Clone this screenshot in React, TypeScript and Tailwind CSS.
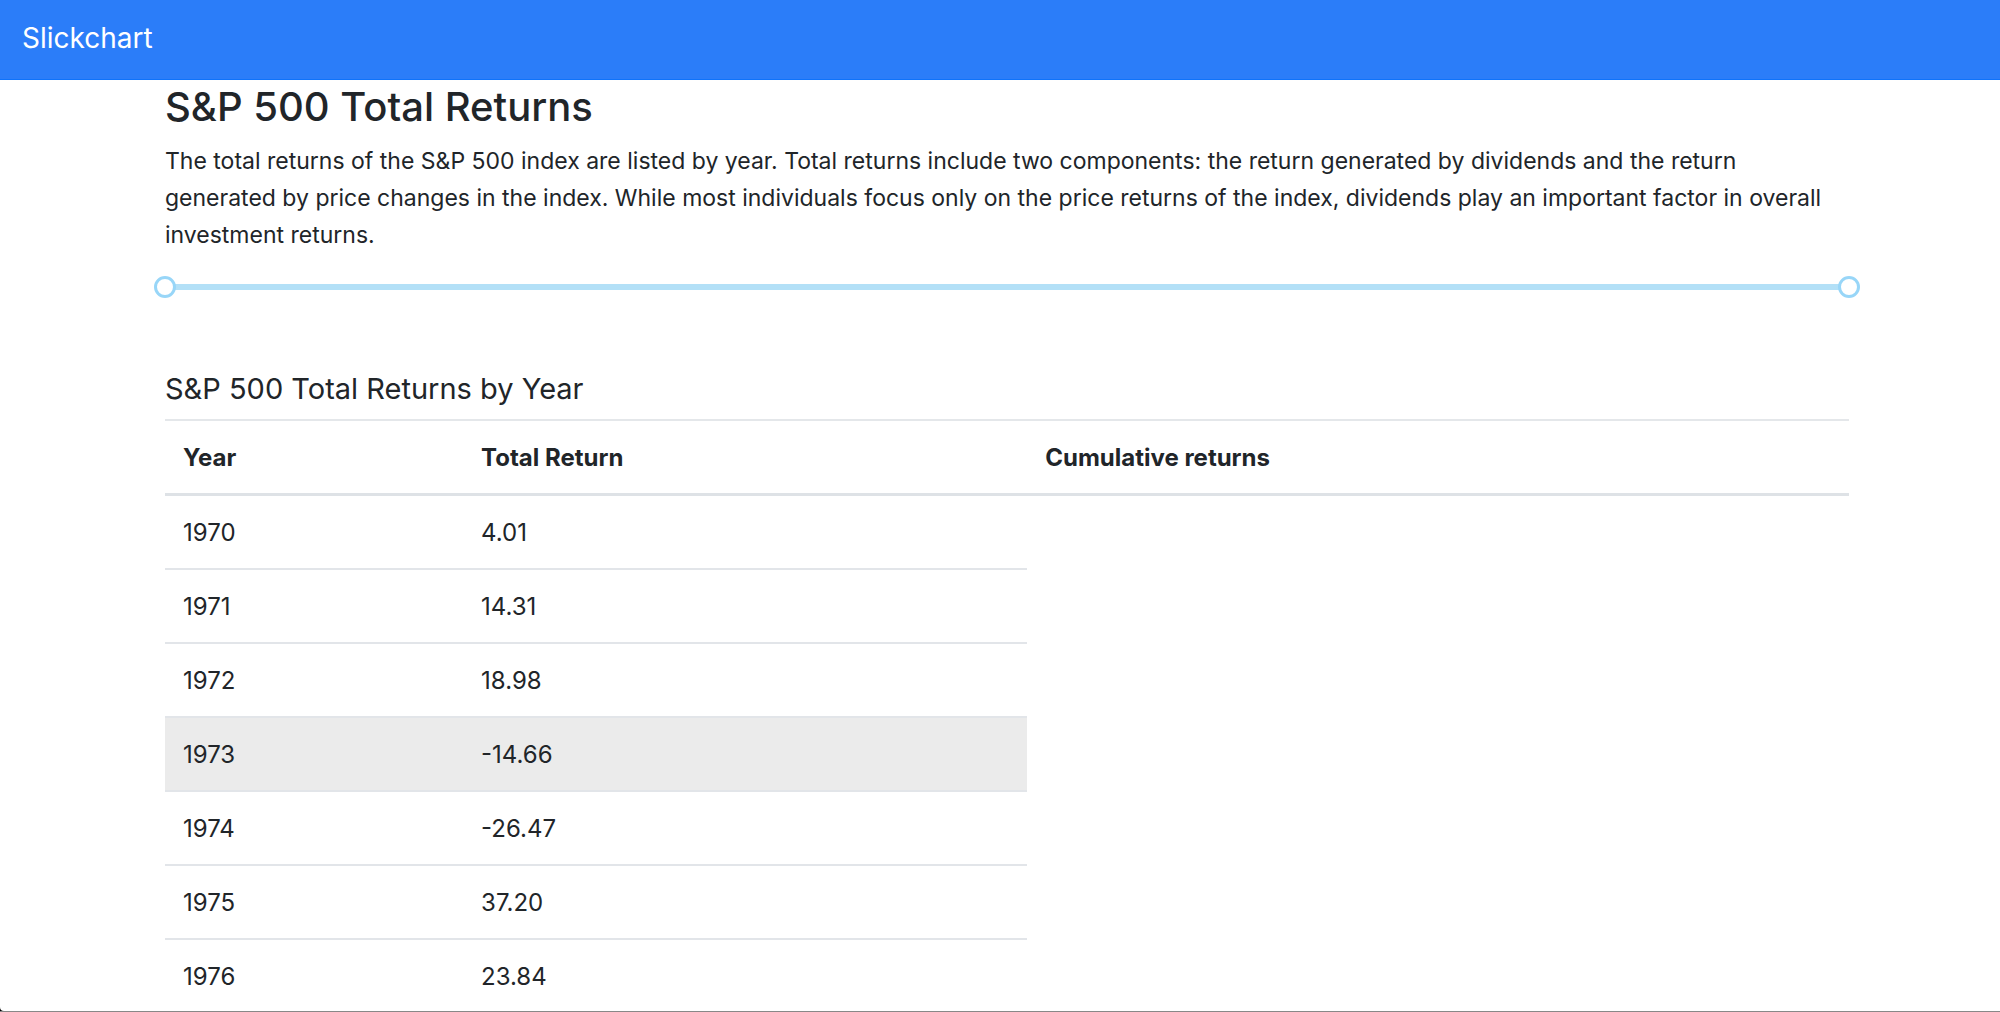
import { useState } from "react";

const returns = [
  { year: 1970, value: "4.01" },
  { year: 1971, value: "14.31" },
  { year: 1972, value: "18.98" },
  { year: 1973, value: "-14.66", active: true },
  { year: 1974, value: "-26.47" },
  { year: 1975, value: "37.20" },
  { year: 1976, value: "23.84" },
];

const MIN = 1970;
const MAX = 2019;

const thumb =
  "pointer-events-none absolute inset-0 h-full w-full appearance-none bg-transparent outline-none [&::-webkit-slider-thumb]:pointer-events-auto [&::-webkit-slider-thumb]:size-[22px] [&::-webkit-slider-thumb]:cursor-grab [&::-webkit-slider-thumb]:appearance-none [&::-webkit-slider-thumb]:rounded-full [&::-webkit-slider-thumb]:border-[3px] [&::-webkit-slider-thumb]:border-solid [&::-webkit-slider-thumb]:border-[#98d6f8] [&::-webkit-slider-thumb]:bg-white";

const headCell = "border-t-2 border-b-3 border-t-[#e4e7ea] border-b-[#dee2e6] px-[18px] pt-[19px] pb-[17px]";
const bodyCell = "border-b-2 border-[#e2e5e9] px-[18px] pt-[19px] pb-[17px]";

function YearRange() {
  const [from, setFrom] = useState(MIN);
  const [to, setTo] = useState(MAX);
  const pct = (v: number) => ((v - MIN) / (MAX - MIN)) * 100;
  return (
    <div className="relative -mx-[11px] mt-[22px] h-[22px] px-[11px]">
      <div className="flex h-full items-center">
        <div className="h-[6px] w-full rounded-full bg-[#e9e9e9]">
          <div
            className="h-full rounded-full bg-[#b3e0f7]"
            style={{ marginLeft: `${pct(from)}%`, width: `${pct(to) - pct(from)}%` }}
          />
        </div>
      </div>
      <input
        type="range"
        aria-label="From year"
        min={MIN}
        max={MAX}
        value={from}
        onChange={(e) => setFrom(Math.min(Number(e.target.value), to))}
        className={thumb}
      />
      <input
        type="range"
        aria-label="To year"
        min={MIN}
        max={MAX}
        value={to}
        onChange={(e) => setTo(Math.max(Number(e.target.value), from))}
        className={thumb}
      />
    </div>
  );
}

export default function App() {
  return (
    <div className="h-screen overflow-hidden border-b border-[#888888] bg-black font-['Inter',sans-serif] text-[#212529]">
      <div className="flex h-full flex-col overflow-hidden rounded-bl-[4px] bg-white">
        <nav className="flex h-20 shrink-0 items-center border-b border-[#0f73fb] bg-[#2b7df9] px-[22px] pb-[3px]">
          <a href="#" className="text-[28px] leading-10 text-white">
            Slickchart
          </a>
        </nav>
        <main className="pr-[151px] pl-[165px]">
          <h1 className="mt-[3px] text-[40px] leading-[48px] font-medium">S&amp;P 500 Total Returns</h1>
          <p className="mt-3 text-[23px] leading-[37px]">
            The total returns of the S&amp;P 500 index are listed by year. Total returns include two components: the
            return generated by dividends and the return generated by price changes in the index. While most individuals
            focus only on the price returns of the index, dividends play an important factor in overall investment
            returns.
          </p>
          <YearRange />
          <h2 className="mt-[73px] text-[29px] leading-9">S&amp;P 500 Total Returns by Year</h2>
          <table className="mt-3 w-full table-fixed border-separate border-spacing-0 text-left text-[24px] leading-9">
            <thead>
              <tr className="font-bold">
                <th scope="col" className={`w-[17.7%] ${headCell}`}>Year</th>
                <th scope="col" className={`w-[33.5%] ${headCell}`}>Total Return</th>
                <th scope="col" className={headCell}>Cumulative returns</th>
              </tr>
            </thead>
            <tbody>
              {returns.map((r, i) => (
                <tr key={r.year}>
                  <td className={`${bodyCell} ${r.active ? "bg-[#ebebeb]" : ""}`}>{r.year}</td>
                  <td className={`${bodyCell} ${r.active ? "bg-[#ebebeb]" : ""}`}>{r.value}</td>
                  {i === 0 && <td rowSpan={returns.length} />}
                </tr>
              ))}
            </tbody>
          </table>
        </main>
      </div>
    </div>
  );
}
